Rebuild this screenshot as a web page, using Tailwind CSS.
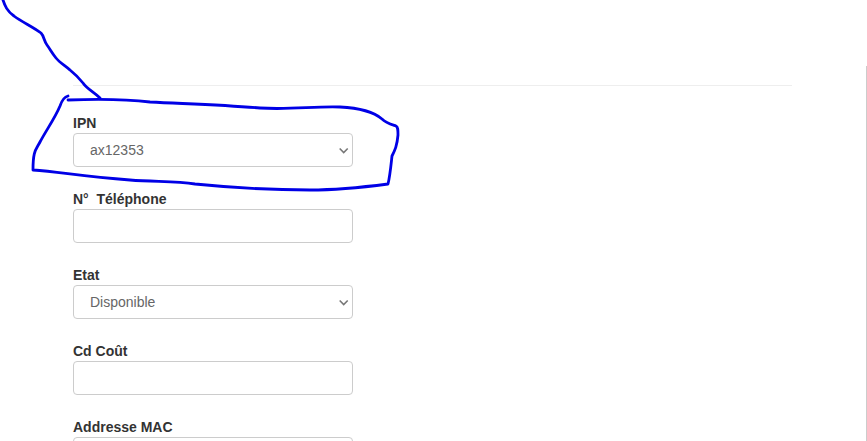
<!DOCTYPE html>
<html lang="fr">

<head>
    <meta charset="UTF-8">
    <title>Ligne</title>
    <script src="https://cdn.jsdelivr.net/npm/@tailwindcss/browser@4"></script>
</head>

<body class="relative h-[441px] overflow-hidden bg-white font-['Liberation_Sans',Arial,sans-serif] text-sm text-[#333]">
    <div class="pt-[66px]">
        <main class="h-[375px] border-r border-[#ccc] pt-[19px]">
            <hr class="ml-[73px] w-[719px] border-t border-[#eee]">

            <form class="ml-[73px] mt-[27px] flex w-[280px] flex-col gap-[22px]">
                <div>
                    <label class="block font-bold leading-5">IPN</label>
                    <div class="relative">
                        <select class="block h-[34px] w-full appearance-none rounded border border-[#ccc] bg-white pl-4 pr-8 text-sm text-[#666]">
                            <option>ax12353</option>
                        </select>
                        <svg class="pointer-events-none absolute right-[4px] top-[14px]" width="10" height="8" viewBox="0 0 10 8" fill="none" stroke="#777" stroke-width="1.6">
                            <path d="M.7 1.5L4.7 5.5L8.7 1.5" />
                        </svg>
                    </div>
                </div>
                <div>
                    <label class="block font-bold leading-5">N°&nbsp; Téléphone</label>
                    <input type="text" class="block h-[34px] w-full rounded border border-[#ccc] bg-white px-3 text-sm text-[#666]">
                </div>
                <div>
                    <label class="block font-bold leading-5">Etat</label>
                    <div class="relative">
                        <select class="block h-[34px] w-full appearance-none rounded border border-[#ccc] bg-white pl-4 pr-8 text-sm text-[#666]">
                            <option>Disponible</option>
                        </select>
                        <svg class="pointer-events-none absolute right-[4px] top-[14px]" width="10" height="8" viewBox="0 0 10 8" fill="none" stroke="#777" stroke-width="1.6">
                            <path d="M.7 1.5L4.7 5.5L8.7 1.5" />
                        </svg>
                    </div>
                </div>
                <div>
                    <label class="block font-bold leading-5">Cd Coût</label>
                    <input type="text" class="block h-[34px] w-full rounded border border-[#ccc] bg-white px-3 text-sm text-[#666]">
                </div>
                <div>
                    <label class="block font-bold leading-5">Addresse MAC</label>
                    <input type="text" class="block h-[34px] w-full rounded border border-[#ccc] bg-white px-3 text-sm text-[#666]">
                </div>
            </form>
        </main>
    </div>

    <!-- hand drawn annotation over the page -->
    <svg class="absolute left-0 top-0" width="867" height="441" fill="none" stroke="#0000e6" stroke-width="2.8" stroke-linejoin="round" stroke-linecap="round">
        <path d="M3 0C5 6 7 11 14 16C22 22 33 27 41 33C44 36 44 41 47 45C50 49 52 53 56 58C60 63 66 66 70 70C75 74 79 78 83 83C87 89 94 92 100 98" />
        <path d="M68 96C64 97 62 100 60 106C55 118 47 129 40 142C36 150 33 150 33 170C60 172 80 176 130 180C155 182 175 181 195 184C225 187 270 190 310 190C340 190 365 187 388 184C390 176 391 165 392 156C395 150 397 146 398 135C398 130 398 127 396 126C390 124 386 123 382 119C375 113 360 108 340 107C315 106 290 110 260 108C225 105 190 104 150 102C125 99 95 99 68 100" />
    </svg>
</body>

</html>
